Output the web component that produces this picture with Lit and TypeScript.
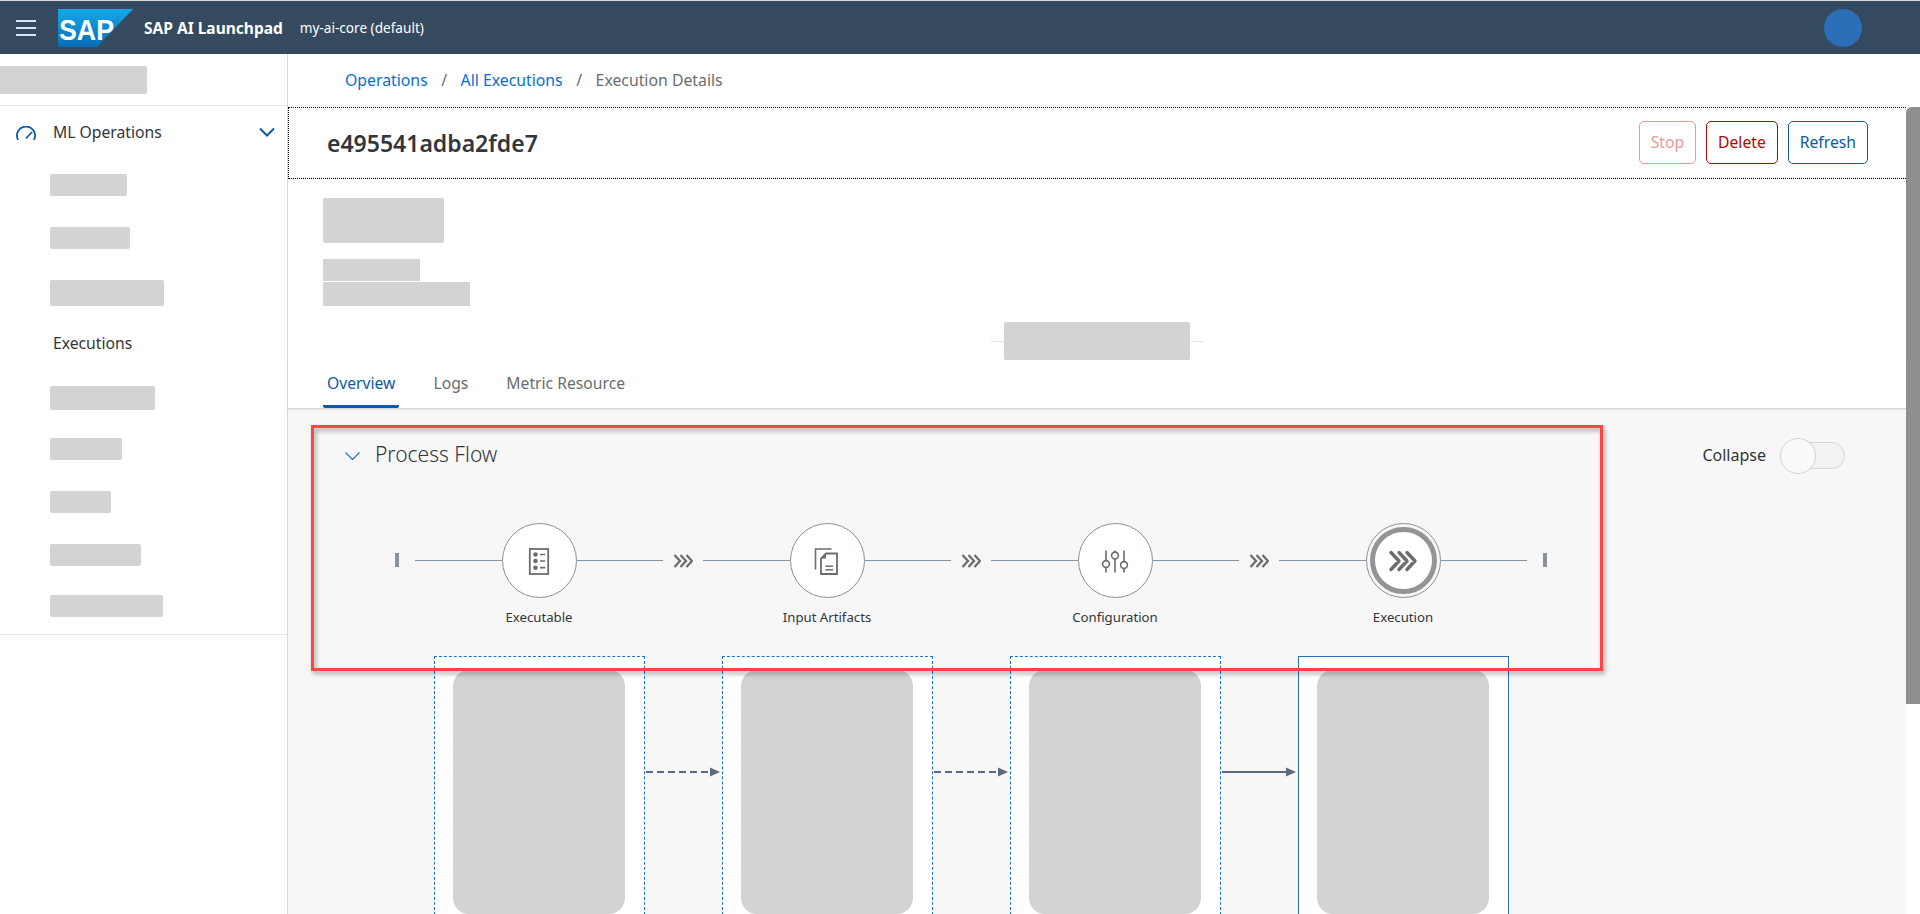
import { LitElement, html, css, svg } from 'lit';
import { customElement } from 'lit/decorators.js';
import { styleMap } from 'lit/directives/style-map.js';

// sidebar rows: bars are redacted labels, top is the gap above each row
const NAV = [
  { w: 77, h: 22, top: 30 },
  { w: 80, h: 22, top: 31 },
  { w: 114, h: 26, top: 31 },
  { label: 'Executions', top: 25 },
  { w: 105, h: 24, top: 31 },
  { w: 72, h: 22, top: 28 },
  { w: 61, h: 22, top: 31 },
  { w: 91, h: 22, top: 31 },
  { w: 113, h: 22, top: 29 },
];

const execIcon = svg`<rect x="6.8" y="4" width="18.4" height="25" fill="none" stroke="#6a6d70" stroke-width="1.8"/>
  <circle cx="12.5" cy="9.5" r="2.3" fill="#6a6d70"/><circle cx="12.5" cy="16" r="2.3" fill="#6a6d70"/><circle cx="12.5" cy="22.7" r="2.3" fill="#6a6d70"/>
  <path d="M17 9.5h5.2M17 16h5.2M17 22.7h5.2" stroke="#6a6d70" stroke-width="1.7" fill="none"/>`;

const artifactIcon = svg`<path d="M4.5 24.5V4H20.5" fill="none" stroke="#6a6d70" stroke-width="1.6"/>
  <path d="M15 8.5H26V29H10V13.5Z" fill="none" stroke="#6a6d70" stroke-width="1.8"/>
  <path d="M10 13.5H15V8.5Z" fill="#6a6d70"/>
  <path d="M14.5 21.3H22M14.5 24.8H22" stroke="#6a6d70" stroke-width="1.6" fill="none"/>`;

const configIcon = svg`<path d="M7 5.5V27.5M16 5.5V27.5M25 5.5V27.5" stroke="#6a6d70" stroke-width="1.6" fill="none"/>
  <circle cx="7" cy="19" r="3.4" fill="#fff" stroke="#6a6d70" stroke-width="1.6"/>
  <circle cx="16" cy="10.5" r="3.4" fill="#fff" stroke="#6a6d70" stroke-width="1.6"/>
  <circle cx="25" cy="20" r="3.4" fill="#fff" stroke="#6a6d70" stroke-width="1.6"/>`;

const runIcon = svg`<path d="M4 7.5L12 16L4 24.5M12 7.5L20 16L12 24.5M20 7.5L28 16L20 24.5" fill="none" stroke="#6a6d70" stroke-width="3.4" stroke-linecap="round" stroke-linejoin="round"/>`;

const STEPS = [
  { label: 'Executable', icon: execIcon },
  { label: 'Input Artifacts', icon: artifactIcon },
  { label: 'Configuration', icon: configIcon },
  { label: 'Execution', icon: runIcon, active: true },
];

@customElement('app-root')
export class AppRoot extends LitElement {
  static styles = css`
    :host {
      display: block;
      position: relative;
      height: 914px;
      overflow: hidden;
      background: #fff;
      color: #32363a;
      font-family: "Noto Sans", "Liberation Sans", sans-serif;
      font-size: 15.7px;
    }
    .shell {
      height: 54px;
      box-sizing: border-box;
      border-top: 1px solid #d9d9d9;
      background: #354a5f;
      display: flex;
      align-items: center;
      color: #fff;
    }
    .burger { width: 20px; margin-left: 16px; display: flex; flex-direction: column; gap: 5px; }
    .burger i { display: block; height: 2px; background: #d1e8ff; }
    .logo { margin-left: 22px; display: block; }
    .logo-text { font-family: "Liberation Sans", sans-serif; font-weight: 700; font-size: 30px; fill: #fff; }
    .app-name { margin-left: 11px; font-weight: 700; font-size: 15.5px; }
    .tenant { margin-left: 17px; font-size: 13.6px; }
    .avatar { width: 38px; height: 38px; border-radius: 50%; background: #2a6fb8; margin-left: auto; margin-right: 58px; }

    .layout { display: flex; height: 860px; }

    .side { width: 287px; border-right: 1px solid #d9d9d9; flex: none; }
    .side-top { height: 52px; box-sizing: border-box; padding-top: 12px; border-bottom: 1px solid #e5e5e5; }
    .side-top div { width: 147px; height: 28px; background: #d3d3d3; border-radius: 0 2px 2px 0; }
    .nav-head { display: flex; align-items: center; height: 24px; margin-top: 14px; padding: 0 12px 0 16px; }
    .nav-head span { margin-left: 17px; flex: 1; }
    .gauge { margin-top: 2px; }
    .nav { padding: 0 0 17px 50px; border-bottom: 1px solid #e5e5e5; }
    .bar { background: #d3d3d3; border-radius: 2px; }
    .nav-text { line-height: 24px; margin-left: 3px; }

    .main { flex: 1; display: flex; flex-direction: column; min-width: 0; }
    .crumbs {
      height: 53px;
      flex: none;
      box-sizing: border-box;
      display: flex;
      align-items: center;
      padding: 0 0 2px 57px;
      color: #6a6d70;
      font-size: 15.8px;
    }
    .crumbs a { color: #0a6ed1; }
    .crumbs .sep { margin: 0 13.5px; }

    .page { flex: 1; display: flex; min-height: 0; }
    .content { flex: 1; min-width: 0; }
    .scroll { width: 14px; flex: none; }
    .thumb { height: 597px; background: #8f8f8f; border-radius: 6px 0 0 0; }

    .title-bar {
      height: 72px;
      box-sizing: border-box;
      border: 1px dotted #000;
      border-right: none;
      display: flex;
      align-items: center;
      justify-content: space-between;
      padding: 0 38px 1px 38px;
    }
    h1 { margin: 0; font-size: 23px; font-weight: 600; }
    .actions { display: flex; gap: 10px; }
    .btn {
      height: 43px;
      box-sizing: border-box;
      display: flex;
      align-items: center;
      padding: 0 11px 2px;
      border: 1px solid;
      border-radius: 5px;
      background: #fff;
    }
    .stop { color: #e89a9a; border-color: #e89a9a; }
    .delete { color: #bb0000; border-color: #bb0000; }
    .refresh { color: #0a5aa8; border-color: #0a5aa8; }

    .info { padding: 19px 0 0 35px; height: 181px; box-sizing: border-box; }
    .info .a { width: 121px; height: 45px; border-radius: 2px; background: #d3d3d3; }
    .info .b { width: 97px; height: 22px; margin-top: 16px; background: #d3d3d3; }
    .info .c { width: 147px; height: 24px; margin-top: 1px; background: #d3d3d3; }
    .status { display: grid; place-items: center; margin: 16px 0 0 -35px; }
    .status > * { grid-area: 1 / 1; }
    .status .rule { width: 214px; height: 1px; background: #e5e5e5; }
    .status .pill { width: 186px; height: 38px; background: #d3d3d3; border-radius: 2px; }

    .tabs {
      height: 49px;
      box-sizing: border-box;
      padding-left: 35px;
      display: flex;
      gap: 30px;
      border-bottom: 1px solid #d9d9d9;
      box-shadow: 0 1px 2px rgba(0, 0, 0, 0.08);
      position: relative;
    }
    .tab { padding: 0 4px; color: #6a6d70; line-height: 46px; height: 48px; box-sizing: border-box; }
    .tab.on { color: #0a5aa8; border-bottom: 3px solid #0a5aa8; border-radius: 0 0 2px 2px; }

    .section { background: #f7f7f7; padding: 29px 61px 0 57px; height: 505px; box-sizing: border-box; }
    .section-head { display: flex; align-items: center; height: 36px; }
    .section-head h2 { margin: 0 0 4px 15px; font-size: 21px; font-weight: 300; flex: 1; }
    .collapse { font-size: 16px; margin: 0 14px 2px 0; }
    .switch { position: relative; width: 65px; height: 36px; }
    .switch .track {
      position: absolute;
      top: 4px;
      left: 10px;
      right: 0;
      height: 27px;
      box-sizing: border-box;
      border: 1px solid #d5d5db;
      border-radius: 14px;
      background: #f2f2f2;
    }
    .switch .knob {
      position: absolute;
      left: 0;
      top: 0;
      width: 36px;
      height: 36px;
      box-sizing: border-box;
      border: 1px solid #d3d3d8;
      border-radius: 50%;
      background: #fafafa;
    }

    .flow { display: flex; align-items: flex-start; margin: 49px 0 0 50px; }
    .cap { width: 4px; height: 14px; background: #89919a; margin-top: 30px; flex: none; }
    .cap.start { margin-right: 16px; }
    .cap.end { margin-left: 16px; }
    .step { width: 248px; height: 105px; flex: none; display: flex; flex-direction: column; align-items: center; }
    .step-row { width: 100%; display: flex; align-items: center; height: 75px; flex: none; }
    .step-row .line { flex: 1; height: 1px; background: #8396a8; }
    .node {
      width: 75px;
      height: 75px;
      flex: none;
      box-sizing: border-box;
      border: 1.5px solid #89919a;
      border-radius: 50%;
      background: #fff;
      display: flex;
      align-items: center;
      justify-content: center;
    }
    .node.active { padding: 3px; background-clip: content-box; }
    .ring {
      width: 100%;
      height: 100%;
      box-sizing: border-box;
      border: 5.5px solid #949494;
      border-radius: 50%;
      display: flex;
      align-items: center;
      justify-content: center;
    }
    .step-label { margin-top: 9px; font-size: 13.2px; line-height: 20px; }
    .link { width: 40px; height: 75px; flex: none; display: flex; align-items: center; justify-content: center; }

    .cards { display: flex; margin: 28px 0 0 89px; align-items: flex-start; }
    .card {
      width: 211px;
      flex: none;
      box-sizing: border-box;
      padding: 13px 19px 20px 18px;
      background: #fff;
      border: 1px dashed #1a73c8;
    }
    .card.current { border: 1px solid #2a6fb8; }
    .card div { height: 244px; background: #d3d3d3; border-radius: 16px; }
    .arrow { width: 77px; flex: none; margin-top: 111px; display: block; }

    .note {
      position: absolute;
      left: 311px;
      top: 425px;
      width: 1292px;
      height: 246px;
      box-sizing: border-box;
      border: 3.5px solid #ff4444;
      filter: drop-shadow(2px 3px 2px rgba(0, 0, 0, 0.35));
      pointer-events: none;
    }
  `;

  private renderNode(step: (typeof STEPS)[number]) {
    const icon = html`<svg width="32" height="32" viewBox="0 0 32 32">${step.icon}</svg>`;
    return step.active
      ? html`<div class="node active"><div class="ring">${icon}</div></div>`
      : html`<div class="node">${icon}</div>`;
  }

  private renderArrow(dashed: boolean) {
    return html`<svg class="arrow" width="77" height="10" viewBox="0 0 77 10">
      <path d="M1 5H66" stroke="#5f6b78" stroke-width="2" stroke-dasharray="${dashed ? '7 4' : 'none'}" fill="none"/>
      <path d="M65 .5L75 5L65 9.5Z" fill="#5f6b78"/>
    </svg>`;
  }

  render() {
    return html`
      <div class="shell">
        <div class="burger"><i></i><i></i><i></i></div>
        <svg class="logo" width="75" height="38" viewBox="0 0 75 38">
          <defs>
            <linearGradient id="sapblue" x1="0" y1="0" x2="0" y2="1">
              <stop offset="0" stop-color="#12a9ea"/>
              <stop offset="1" stop-color="#0a6cb8"/>
            </linearGradient>
          </defs>
          <path d="M0 0H75L39 38H0Z" fill="url(#sapblue)"/>
          <text class="logo-text" x="1" y="31" textLength="55" lengthAdjust="spacingAndGlyphs">SAP</text>
        </svg>
        <span class="app-name">SAP AI Launchpad</span>
        <span class="tenant">my-ai-core (default)</span>
        <div class="avatar"></div>
      </div>

      <div class="layout">
        <div class="side">
          <div class="side-top"><div></div></div>
          <div class="nav-head">
            <svg class="gauge" width="20" height="14" viewBox="0 0 20 14">
              <path d="M2.2 14A9 9 0 1 1 17.8 14" fill="none" stroke="#0a5aa8" stroke-width="1.8"/>
              <path d="M10 12.5L16 6" stroke="#0a5aa8" stroke-width="1.8" fill="none"/>
            </svg>
            <span>ML Operations</span>
            <svg width="16" height="10" viewBox="0 0 16 10"><path d="M1 1.5L8 8.5L15 1.5" fill="none" stroke="#0a5aa8" stroke-width="2"/></svg>
          </div>
          <div class="nav">
            ${NAV.map((row) =>
              row.label
                ? html`<div class="nav-text" style=${styleMap({ marginTop: `${row.top}px` })}>${row.label}</div>`
                : html`<div class="bar" style=${styleMap({ width: `${row.w}px`, height: `${row.h}px`, marginTop: `${row.top}px` })}></div>`
            )}
          </div>
        </div>

        <div class="main">
          <div class="crumbs">
            <a>Operations</a><span class="sep">/</span><a>All Executions</a><span class="sep">/</span><span>Execution Details</span>
          </div>
          <div class="page">
            <div class="content">
              <div class="title-bar">
                <h1>e495541adba2fde7</h1>
                <div class="actions">
                  <div class="btn stop">Stop</div>
                  <div class="btn delete">Delete</div>
                  <div class="btn refresh">Refresh</div>
                </div>
              </div>
              <div class="info">
                <div class="a"></div>
                <div class="b"></div>
                <div class="c"></div>
                <div class="status"><div class="rule"></div><div class="pill"></div></div>
              </div>
              <div class="tabs">
                <div class="tab on">Overview</div>
                <div class="tab">Logs</div>
                <div class="tab">Metric Resource</div>
              </div>
              <div class="section">
                <div class="section-head">
                  <svg width="15" height="8" viewBox="0 0 15 8"><path d="M.5 .5L7.5 7.5L14.5 .5" fill="none" stroke="#2a6fb8" stroke-width="1.2"/></svg>
                  <h2>Process Flow</h2>
                  <span class="collapse">Collapse</span>
                  <div class="switch"><div class="track"></div><div class="knob"></div></div>
                </div>
                <div class="flow">
                  <div class="cap start"></div>
                  ${STEPS.map(
                    (step, i) => html`
                      <div class="step">
                        <div class="step-row"><div class="line"></div>${this.renderNode(step)}<div class="line"></div></div>
                        <div class="step-label">${step.label}</div>
                      </div>
                      ${i < STEPS.length - 1
                        ? html`<div class="link">
                            <svg width="20" height="14" viewBox="0 0 20 14">
                              <path d="M1.5 1L7 7L1.5 13M7.5 1L13 7L7.5 13M13.5 1L19 7L13.5 13" fill="none" stroke="#6a6d70" stroke-width="2.3"/>
                            </svg>
                          </div>`
                        : ''}
                    `
                  )}
                  <div class="cap end"></div>
                </div>
                <div class="cards">
                  <div class="card"><div></div></div>
                  ${this.renderArrow(true)}
                  <div class="card"><div></div></div>
                  ${this.renderArrow(true)}
                  <div class="card"><div></div></div>
                  ${this.renderArrow(false)}
                  <div class="card current"><div></div></div>
                </div>
              </div>
            </div>
            <div class="scroll"><div class="thumb"></div></div>
          </div>
        </div>
      </div>
      <div class="note"></div>
    `;
  }
}
